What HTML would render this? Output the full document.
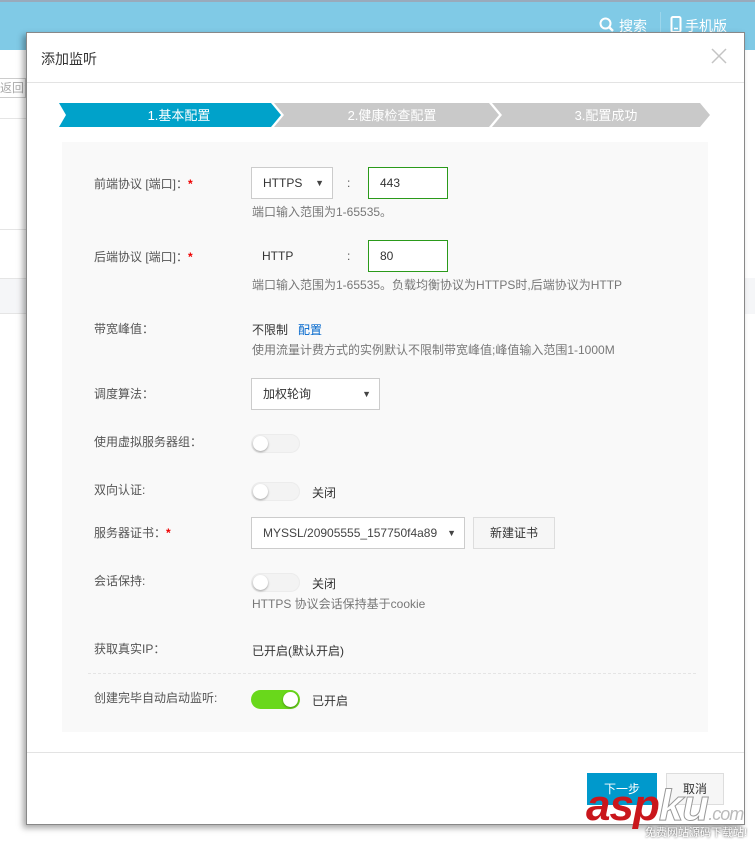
<!DOCTYPE html>
<html><head><meta charset="utf-8"><style>
*{box-sizing:border-box;margin:0;padding:0}
body{width:755px;height:844px;position:relative;overflow:hidden;background:#fff;font-family:"Liberation Sans","Noto Sans CJK SC",sans-serif;font-size:12px;color:#333}
.a{position:absolute;white-space:nowrap}
.lbl{position:absolute;left:94px;color:#555;font-size:12px;line-height:14px}
.lbl i{color:#e00;font-style:normal;font-weight:bold}
.hint{position:absolute;left:252px;color:#777;font-size:12px;line-height:14px}
.tg{position:absolute;left:251px;width:49px;height:19px;border-radius:10px;background:#f3f3f3;box-shadow:inset 0 0 0 1px #ececec}
.tg:after{content:"";position:absolute;left:2px;top:2px;width:15px;height:15px;border-radius:50%;background:#fff;box-shadow:0 1px 2px rgba(0,0,0,.35)}
.tg.on{background:#69d81b;box-shadow:none}
.tg.on:after{left:32px}
.box{position:absolute;background:#fff;border:1px solid #ccc;line-height:30px;padding-left:11px;color:#333}
.box b{position:absolute;right:8px;top:0;font-size:9px;font-weight:normal;color:#444}
</style></head><body>
<div class="a" style="left:0;top:0;width:755px;height:50px;background:#80cae6;border-top:2px solid #9ab"></div>
<svg class="a" style="left:599px;top:17px" width="16" height="16"><circle cx="6.5" cy="6.5" r="5" fill="none" stroke="#fff" stroke-width="2"/><line x1="10" y1="10" x2="14" y2="14" stroke="#fff" stroke-width="2.4"/></svg>
<div class="a" style="left:619px;top:16px;color:#fff;font-size:14px">搜索</div>
<div class="a" style="left:660px;top:12px;width:1px;height:38px;background:#9cd6ec"></div>
<svg class="a" style="left:670px;top:16px" width="12" height="17"><rect x="1.5" y="1" width="9" height="15" rx="1.5" fill="none" stroke="#fff" stroke-width="2"/><line x1="4" y1="12.5" x2="8" y2="12.5" stroke="#fff" stroke-width="1.5"/></svg>
<div class="a" style="left:685px;top:16px;color:#fff;font-size:14px">手机版</div>
<div class="a" style="left:0;top:78px;width:26px;height:20px;border:1px solid #ccc;border-left:none;color:#aaa;font-size:12px;line-height:18px;overflow:hidden">返回负</div>
<div class="a" style="left:0;top:118px;width:26px;height:1px;background:#e5e5e5"></div>
<div class="a" style="left:0;top:229px;width:26px;height:1px;background:#e5e5e5"></div>
<div class="a" style="left:0;top:278px;width:26px;height:36px;background:#f5f6f8;border-top:1px solid #e5e5e5;border-bottom:1px solid #e5e5e5"></div>
<div class="a" style="left:745px;top:278px;width:10px;height:36px;background:#f5f6f8"></div>
<div class="a" style="left:26px;top:32px;width:719px;height:793px;background:#fff;box-shadow:-3px 3px 6px rgba(0,0,0,.35);border:1px solid #888"></div>
<div class="a" style="left:41px;top:49px;font-size:14px;color:#333">添加监听</div>
<svg class="a" style="left:711px;top:48px" width="16" height="16"><path d="M1 1L15 15M15 1L1 15" stroke="#c4c4c4" stroke-width="1.5"/></svg>
<div class="a" style="left:27px;top:82px;width:717px;height:1px;background:#e3e3e3"></div>
<svg class="a" style="left:59px;top:103px" width="652" height="25">
<polygon points="0,0 212,0 222,12 212,24 0,24 7,12" fill="#00a2ca"/>
<polygon points="215,0 430,0 440,12 430,24 215,24 225,12" fill="#c9c9c9"/>
<polygon points="433,0 641,0 651,12 641,24 433,24 443,12" fill="#c9c9c9"/>
<text x="120" y="17" font-size="13" fill="#fff" text-anchor="middle" font-family="Liberation Sans,Noto Sans CJK SC,sans-serif">1.基本配置</text>
<text x="333" y="17" font-size="13" fill="#fff" text-anchor="middle" font-family="Liberation Sans,Noto Sans CJK SC,sans-serif">2.健康检查配置</text>
<text x="547" y="17" font-size="13" fill="#fff" text-anchor="middle" font-family="Liberation Sans,Noto Sans CJK SC,sans-serif">3.配置成功</text>
</svg>
<div class="a" style="left:62px;top:142px;width:646px;height:590px;background:#f9f9f9"></div>

<div class="lbl" style="top:177px">前端协议 [端口]：<i>*</i></div>
<div class="box" style="left:251px;top:167px;width:82px;height:32px">HTTPS<b>▼</b></div>
<div class="a" style="left:347px;top:176px;color:#555">:</div>
<div class="box" style="left:368px;top:167px;width:80px;height:32px;border-color:#2a9a1a">443</div>
<div class="hint" style="top:205px">端口输入范围为1-65535。</div>

<div class="lbl" style="top:250px">后端协议 [端口]：<i>*</i></div>
<div class="a" style="left:262px;top:249px;color:#333">HTTP</div>
<div class="a" style="left:347px;top:249px;color:#555">:</div>
<div class="box" style="left:368px;top:240px;width:80px;height:32px;border-color:#2a9a1a">80</div>
<div class="hint" style="top:278px">端口输入范围为1-65535。负载均衡协议为HTTPS时,后端协议为HTTP</div>

<div class="lbl" style="top:322px">带宽峰值：</div>
<div class="a" style="left:252px;top:321px;color:#333">不限制 &nbsp;&nbsp;<span style="color:#06c">配置</span></div>
<div class="hint" style="top:343px">使用流量计费方式的实例默认不限制带宽峰值;峰值输入范围1-1000M</div>

<div class="lbl" style="top:387px">调度算法：</div>
<div class="box" style="left:251px;top:378px;width:129px;height:32px">加权轮询<b>▼</b></div>

<div class="lbl" style="top:435px">使用虚拟服务器组：</div>
<div class="tg" style="top:434px"></div>

<div class="lbl" style="top:483px">双向认证:</div>
<div class="tg" style="top:482px"></div>
<div class="a" style="left:312px;top:484px">关闭</div>

<div class="lbl" style="top:526px">服务器证书：<i>*</i></div>
<div class="box" style="left:251px;top:517px;width:214px;height:32px;color:#444">MYSSL/20905555_157750f4a89<b>▼</b></div>
<div class="a" style="left:473px;top:517px;width:82px;height:32px;border:1px solid #ddd;background:#f6f6f6;text-align:center;line-height:30px">新建证书</div>

<div class="lbl" style="top:574px">会话保持:</div>
<div class="tg" style="top:573px"></div>
<div class="a" style="left:312px;top:575px">关闭</div>
<div class="hint" style="top:597px">HTTPS 协议会话保持基于cookie</div>

<div class="lbl" style="top:642px">获取真实IP：</div>
<div class="a" style="left:252px;top:642px">已开启(默认开启)</div>

<div class="a" style="left:88px;top:673px;width:608px;border-top:1px dashed #e5e5e5"></div>

<div class="lbl" style="top:691px">创建完毕自动启动监听:</div>
<div class="tg on" style="top:690px"></div>
<div class="a" style="left:312px;top:692px">已开启</div>

<div class="a" style="left:27px;top:752px;width:717px;height:1px;background:#e3e3e3"></div>
<div class="a" style="left:587px;top:773px;width:70px;height:32px;background:#0099cc;color:#fff;text-align:center;line-height:32px">下一步</div>
<div class="a" style="left:666px;top:773px;width:58px;height:32px;background:#f6f6f6;border:1px solid #ddd;text-align:center;line-height:30px">取消</div>
<div class="a" style="left:586px;top:784px;font-size:44px;font-weight:bold;font-style:italic;color:#c9161c;letter-spacing:-1px;line-height:44px">asp<span style="color:#fff;-webkit-text-stroke:1px #999">ku</span><span style="font-size:18px;color:#bbb;font-weight:normal">.com</span></div>
<div class="a" style="left:645px;top:824px;font-size:11px;color:#fff;text-shadow:0 0 2px #333">免费网站源码下载站!</div>
</body></html>
